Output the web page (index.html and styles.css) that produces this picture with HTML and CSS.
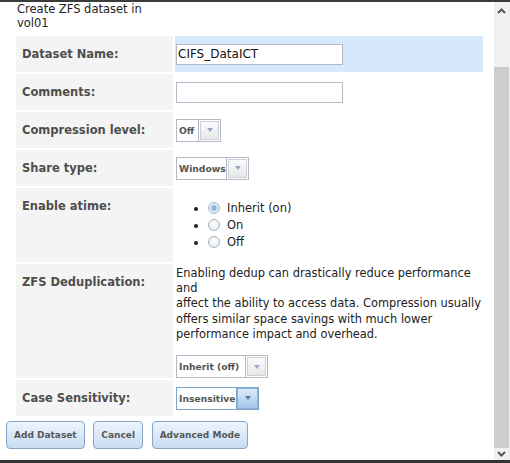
FILE: index.html
```html
<!DOCTYPE html>
<html>
<head>
<meta charset="utf-8">
<link rel="stylesheet" href="styles.css">
</head>
<body>
<div class="frame">
  <div class="content">
    <div class="title">Create ZFS dataset in vol01</div>
    <table class="form">
      <tr>
        <td class="label">Dataset Name:</td>
        <td class="value hl"><input class="text" type="text" value="CIFS_DataICT"></td>
      </tr>
      <tr>
        <td class="label">Comments:</td>
        <td class="value"><input class="text" type="text" value=""></td>
      </tr>
      <tr>
        <td class="label">Compression level:</td>
        <td class="value">
          <div class="select"><span class="select-text w-off">Off</span><span class="select-btn"><span class="face"><span class="tri"></span></span></span></div>
        </td>
      </tr>
      <tr>
        <td class="label">Share type:</td>
        <td class="value">
          <div class="select"><span class="select-text w-win">Windows</span><span class="select-btn"><span class="face"><span class="tri"></span></span></span></div>
        </td>
      </tr>
      <tr>
        <td class="label">Enable atime:</td>
        <td class="value">
          <ul class="radios">
            <li><span class="radio checked"></span>Inherit (on)</li>
            <li><span class="radio"></span>On</li>
            <li><span class="radio"></span>Off</li>
          </ul>
        </td>
      </tr>
      <tr>
        <td class="label">ZFS Deduplication:</td>
        <td class="value top">
          <div class="note">Enabling dedup can drastically reduce performance<br>and<br>affect the ability to access data. Compression usually<br>offers similar space savings with much lower<br>performance impact and overhead.</div>
          <div class="select spaced"><span class="select-text w-inh">Inherit (off)</span><span class="select-btn"><span class="face"><span class="tri"></span></span></span></div>
        </td>
      </tr>
      <tr>
        <td class="label">Case Sensitivity:</td>
        <td class="value">
          <div class="select active"><span class="select-text w-ins">Insensitive</span><span class="select-btn"><span class="face"><span class="tri"></span></span></span></div>
        </td>
      </tr>
    </table>
    <div class="actions">
      <button class="btn">Add Dataset</button>
      <button class="btn">Cancel</button>
      <button class="btn">Advanced Mode</button>
    </div>
  </div>
  <div class="scrollbar">
    <div class="sb-btn sb-up"><svg width="9" height="6" viewBox="0 0 9 6"><polyline points="1,5 4.5,1.5 8,5" fill="none" stroke="#555" stroke-width="2"/></svg></div>
    <div class="sb-track"></div>
    <div class="sb-thumb"></div>
    <div class="sb-btn sb-down"><svg width="9" height="6" viewBox="0 0 9 6"><polyline points="1,1 4.5,4.5 8,1" fill="none" stroke="#555" stroke-width="2"/></svg></div>
  </div>
</div>
</body>
</html>
```

FILE: styles.css
```css
html, body {
  margin: 0;
  padding: 0;
  background: #fff;
}

body {
  font-family: "DejaVu Sans", Verdana, sans-serif;
  font-size: 11.5px;
  color: #222;
}

.frame {
  height: 463px;
  box-sizing: border-box;
  border-top: 2px solid #3b3b3b;
  border-bottom: 3px solid #343434;
  display: flex;
  overflow: hidden;
}

.content {
  flex: 1;
  overflow: hidden;
}

.title {
  margin: 0 0 0 17px;
  width: 140px;
  line-height: 14px;
  color: #222;
}

.form {
  border-collapse: separate;
  border-spacing: 2px;
  margin: 4px 0 0 14px;
  width: 471px;
  table-layout: fixed;
}

.label {
  width: 145px;
  padding: 11px 6px;
  line-height: 14px;
  background: #f4f4f4;
  font-weight: bold;
  color: #4e4e4e;
  vertical-align: top;
}

.value {
  padding: 0 1px;
  vertical-align: middle;
}

.value.top {
  vertical-align: top;
}

.value.hl {
  background: #d6e9fc;
}

.text {
  display: block;
  width: 167px;
  height: 21px;
  box-sizing: border-box;
  margin: 0;
  padding: 0 1px;
  border: 1px solid #b5b9c6;
  background: #fff;
  font-family: "DejaVu Sans", Verdana, sans-serif;
  font-size: 12px;
  color: #111;
  outline: none;
}

/* custom select */
.select {
  display: flex;
  width: max-content;
  height: 23px;
  box-sizing: border-box;
  border: 1px solid #b5b9c6;
  background: #fff;
}

.select.spaced {
  margin-top: 13px;
}

.select-text {
  box-sizing: border-box;
  padding: 0 2px;
  line-height: 21px;
  font-weight: bold;
  font-size: 9.2px;
  color: #555;
  border-right: 1px solid #b5b9c6;
  white-space: nowrap;
}

.w-off { width: 22px; }
.w-win { width: 50px; }
.w-inh { width: 69px; }
.w-ins { width: 60px; }

.select-btn {
  width: 21px;
  box-sizing: border-box;
  padding: 1px;
  display: flex;
}

.face {
  flex: 1;
  border: 1px solid #cdd0d7;
  background: linear-gradient(#fbfbfb, #e8e8e8);
  display: flex;
  align-items: center;
  justify-content: center;
}

.tri {
  width: 0;
  height: 0;
  border-left: 3.5px solid transparent;
  border-right: 3.5px solid transparent;
  border-top: 4px solid #9ca7c5;
}

.select.active {
  border-color: #7ca5cc;
}

.select.active .select-text {
  border-right-color: #7ca5cc;
}

.select.active .select-btn {
  padding: 0;
}

.select.active .face {
  border-color: #8db1d6;
  background: linear-gradient(#dcebfa, #a6c7e9);
}

.select.active .tri {
  border-top-color: #5878aa;
}

/* radios */
.radios {
  margin: 11.5px 0;
  padding-left: 32px;
}

.radios li {
  height: 17px;
  line-height: 17px;
}

.radio {
  display: inline-block;
  width: 12px;
  height: 12px;
  box-sizing: border-box;
  border: 1px solid #a9b5c2;
  border-radius: 50%;
  background: radial-gradient(circle at 50% 40%, #ffffff 0%, #eef1f4 55%, #d7dde5 100%);
  vertical-align: -2px;
  margin-right: 7px;
}

.radio.checked {
  background: radial-gradient(circle at 50% 50%, #7eabd3 0%, #8fb8dc 30%, #cfe0ef 45%, #eef2f6 70%, #d7dde5 100%);
}

.note {
  padding-top: 2px;
  line-height: 15.2px;
  font-size: 11.4px;
  white-space: nowrap;
  color: #222;
}

/* buttons */
.actions {
  display: flex;
  gap: 8.7px;
  padding: 3px 0 0 6px;
}

.btn {
  height: 28px;
  margin: 0;
  padding: 0 7px;
  border: 1px solid #86a6c8;
  border-radius: 4px;
  background: linear-gradient(#edf5fd, #c8dcf3);
  font-family: "DejaVu Sans", Verdana, sans-serif;
  font-weight: bold;
  font-size: 9px;
  color: #575757;
  white-space: nowrap;
}

/* scrollbar */
.scrollbar {
  width: 16px;
  flex: none;
  background: #f0f0f0;
  display: flex;
  flex-direction: column;
}

.sb-btn {
  display: flex;
  align-items: center;
  justify-content: center;
  padding-right: 1px;
}

.sb-up {
  height: 17px;
}

.sb-track {
  height: 48px;
}

.sb-thumb {
  height: 381px;
  width: 15px;
  background: #cdcdcd;
}

.sb-down {
  height: 12px;
}
```
